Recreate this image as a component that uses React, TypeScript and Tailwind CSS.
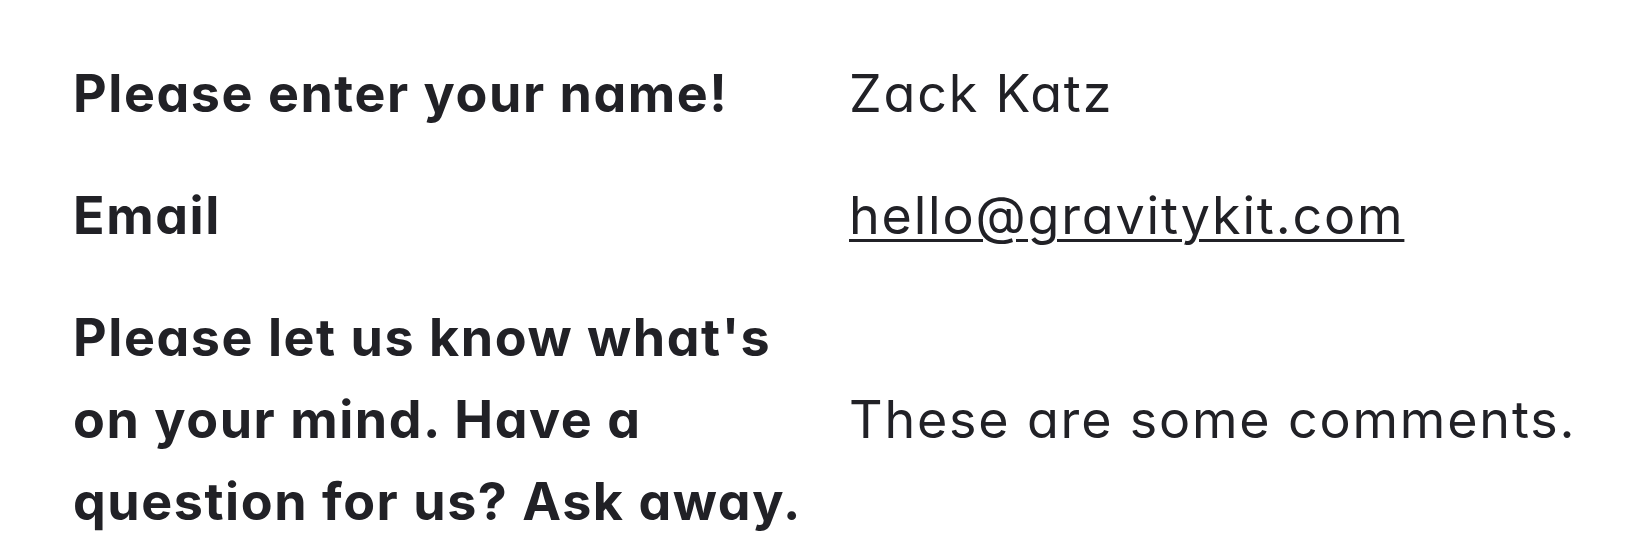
const entries = [
  { label: "Please enter your name!", value: "Zack Katz", link: false },
  { label: "Email", value: "hello@gravitykit.com", link: true },
  {
    label: "Please let us know what's on your mind. Have a question for us? Ask away.",
    value: "These are some comments.",
    link: false,
  },
];

export default function App() {
  return (
    <div className="min-h-screen bg-white pt-[33px] pl-[73px] font-['Inter','Liberation_Sans',sans-serif] text-[#212126] [font-feature-settings:'cv11'_1]">
      {entries.map((entry, index) => (
        <div
          key={index}
          className="grid grid-cols-[776px_1fr] items-center py-[20px] text-[52px] leading-[82px]"
        >
          <div className="font-bold tracking-[0.03em] pr-[20px]">{entry.label}</div>
          <div className="font-normal tracking-[0.035em]">
            {entry.link ? (
              <a href="#" className="underline decoration-[3px] underline-offset-[5px]">
                {entry.value}
              </a>
            ) : (
              entry.value
            )}
          </div>
        </div>
      ))}
    </div>
  );
}
